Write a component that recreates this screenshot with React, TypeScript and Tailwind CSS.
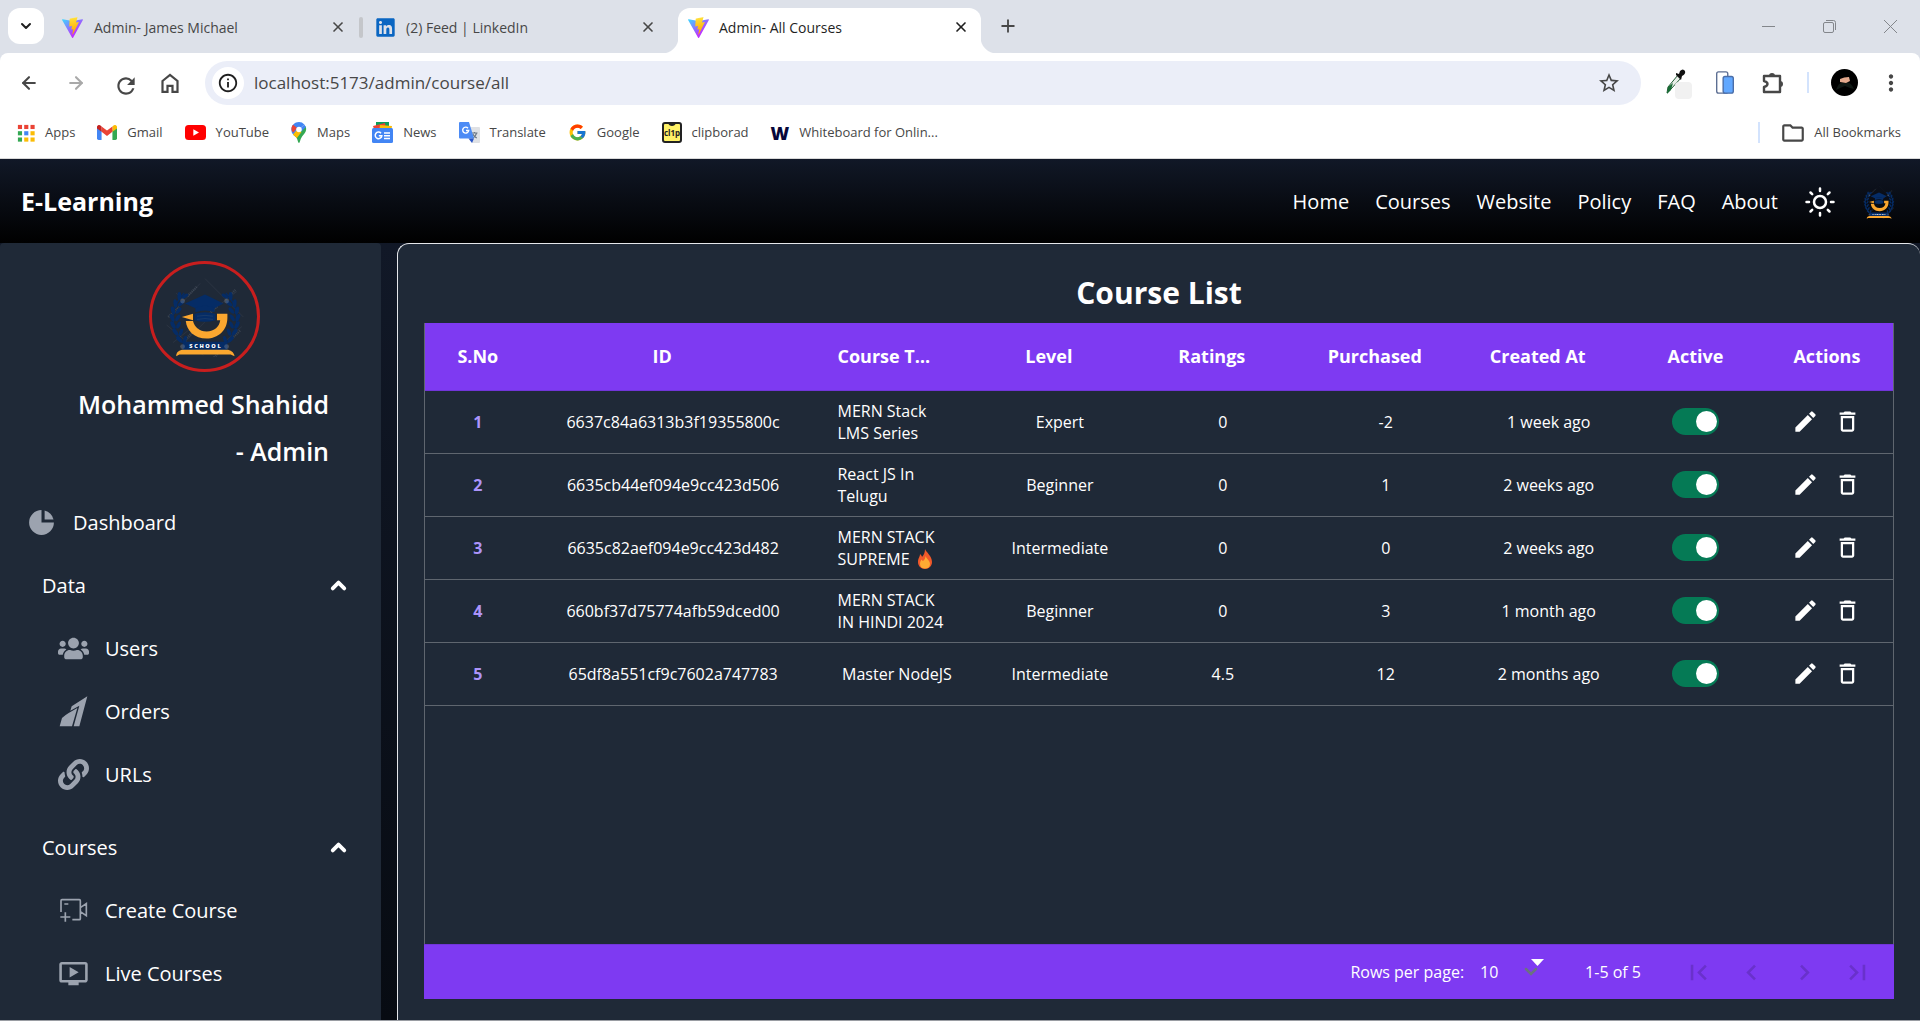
import React from "react";
import { FcGoogle } from "react-icons/fc";
import { FaUsers, FaLink, FaLinkedin } from "react-icons/fa";
import { HiChartPie } from "react-icons/hi";
import {
  MdOndemandVideo,
  MdModeEdit,
  MdDeleteOutline,
  MdFirstPage,
  MdLastPage,
  MdNavigateBefore,
  MdNavigateNext,
  MdMoreVert,
  MdRefresh,
  MdStarBorder,
  MdOutlineFolder,
  MdOutlineInfo,
} from "react-icons/md";
import { ArrowLeft, ArrowRight, ChevronDown, ChevronUp, Plus, X } from "lucide-react";

function ViteLogo({ id }: { id: string }) {
  return (
    <svg viewBox="0 0 256 257" className="size-[21px] shrink-0" aria-hidden="true">
      <defs>
        <linearGradient id={id + "a"} x1="-.828%" x2="57.636%" y1="7.652%" y2="78.411%">
          <stop offset="0%" stopColor="#41D1FF" />
          <stop offset="100%" stopColor="#BD34FE" />
        </linearGradient>
        <linearGradient id={id + "b"} x1="43.376%" x2="50.316%" y1="2.242%" y2="89.03%">
          <stop offset="0%" stopColor="#FFEA83" />
          <stop offset="8.333%" stopColor="#FFDD35" />
          <stop offset="100%" stopColor="#FFA800" />
        </linearGradient>
      </defs>
      <path
        fill={`url(#${id}a)`}
        d="M255.153 37.938L134.897 252.976c-2.483 4.44-8.862 4.466-11.382.048L.875 37.958c-2.746-4.814 1.371-10.646 6.827-9.67l120.385 21.517a6.537 6.537 0 0 0 2.322-.004l117.867-21.483c5.438-.991 9.574 4.796 6.877 9.62Z"
      />
      <path
        fill={`url(#${id}b)`}
        d="M185.432.063L96.44 17.501a3.268 3.268 0 0 0-2.634 3.014l-5.474 92.456a3.268 3.268 0 0 0 3.997 3.378l24.777-5.718c2.318-.535 4.413 1.507 3.936 3.838l-7.361 36.047c-.495 2.426 1.782 4.5 4.151 3.78l15.304-4.649c2.372-.72 4.652 1.36 4.15 3.788l-11.698 56.621c-.732 3.542 3.979 5.473 5.943 2.437l1.313-2.028l72.516-144.72c1.215-2.423-.88-5.186-3.54-4.672l-25.505 4.922c-2.396.462-4.435-1.77-3.759-4.114l16.646-57.705c.677-2.35-1.37-4.583-3.769-4.113Z"
      />
    </svg>
  );
}

function SchoolLogo({ className }: { className: string }) {
  const leaves = [0, 1, 2, 3, 4, 5, 6];
  const spots = [
    [22, 30],
    [77, 30],
    [22, 87],
    [77, 87],
  ];
  return (
    <svg viewBox="0 0 100 100" className={className} role="img" aria-label="School logo">
      <g stroke="#8f97a3" strokeOpacity=".22" strokeWidth=".6" fill="none">
        <path d="M14 40 44 8M56 44 90 18M26 80 50 56M60 94 96 62M10 82 30 66M50 2l48 48M2 60l46 38M14 20l10 10" />
        <g strokeWidth="3" strokeDasharray="1.5 1">
          <path d="M28 24 40 12M4 50 18 38M80 24l8-8M52 50l14-14M24 80l12-13M80 80l14-13M56 106l12-12" />
        </g>
      </g>
      <g fill="#052c66">
        {[false, true].map((flip) => (
          <g key={String(flip)} transform={flip ? "translate(100 0) scale(-1 1)" : undefined}>
            <path d="M24 20C8 36 4 60 22 82" fill="none" stroke="#052c66" strokeWidth="1.4" />
            {leaves.map((i) => {
              const cy = 24 + i * 9;
              const t = (i - 3) / 3;
              const cx = 11 + t * t * 9;
              return (
                <g key={i}>
                  <ellipse cx={cx - 2} cy={cy} rx="2.4" ry="5.2" transform={`rotate(${-22 - t * 22} ${cx - 2} ${cy})`} />
                  <ellipse cx={cx + 5} cy={cy} rx="2.2" ry="4.8" transform={`rotate(${34 - t * 20} ${cx + 5} ${cy})`} />
                </g>
              );
            })}
          </g>
        ))}
        <path d="M50 22 25 33l13 6q12-4 24 0l11-6z" />
        <path d="M38 38q12-4 24 0v6q-12-4-24 0zM37 46q13-4 26 0v8q-13 4-26 0z" />
        <path d="M40 49q10-2 20 0M40 53q10-2 20 0" stroke="#1f3d68" strokeWidth="1" fill="none" />
        <path d="M22 81h56v11H22z" />
      </g>
      {spots.map(([x, y]) => (
        <circle key={`${x}-${y}`} cx={x} cy={y} r="3" fill="#8f97a3" fillOpacity=".35" />
      ))}
      <g fill="#fba72f">
        <path d="M21 50 35 46v8z" />
        <path d="M65 46h13v5c0 16-12 26-26 26-15 0-25-10-26-22h9c2 8 8 13 17 13 10 0 16-6 17-14h-4z" />
        <path d="M14 99c0-5 4-8 9-8h54c5 0 9 3 10 8l-5-2H18z" />
      </g>
      <text x="51" y="89" textAnchor="middle" fontSize="7" fontWeight="800" letterSpacing="2" fill="#fff" fontFamily="Open Sans, sans-serif">
        SCHOOL
      </text>
    </svg>
  );
}

function OrdersIcon() {
  return (
    <svg viewBox="0 0 93 93" className="size-[31px]" fill="currentColor" aria-hidden="true">
      <path d="M88 1 64 91H47l17-62-27 15 4-13z" />
      <path d="M5 91 12 66q12-11 20-15l26-15-16 55z" />
    </svg>
  );
}

function CreateCourseIcon() {
  return (
    <svg viewBox="0 0 93 93" className="size-[31px]" fill="none" stroke="currentColor" strokeWidth="5" aria-hidden="true">
      <path d="M9 51V17q0-3 3-3h52q3 0 3 3v54q0 3-3 3H43M19 27h12M67 38l18-12v36L67 50M7 66h30M22 52v28" />
    </svg>
  );
}

function SunIcon() {
  return (
    <svg viewBox="0 0 32 32" className="size-8" fill="none" stroke="currentColor" strokeWidth="2.5" strokeLinecap="round" aria-hidden="true">
      <circle cx="16" cy="16" r="6" />
      <path d="M16 2.500v2.500M16 27v2.500M2.500 16H5M27 16h2.500M6.500 6.500l1.700 1.700M23.800 23.800l1.700 1.700M6.500 25.500l1.700-1.700M23.800 8.200l1.700-1.700" />
    </svg>
  );
}

function HomeIcon() {
  return (
    <svg viewBox="0 0 20 20" className="size-5" fill="none" stroke="currentColor" strokeWidth="2.200" aria-hidden="true">
      <path d="M2.500 8 10 2l7.500 6v10.800h-5v-6h-5v6h-5z" />
    </svg>
  );
}

function ExtensionIcon() {
  return (
    <svg viewBox="0 0 24 24" className="size-6" aria-hidden="true">
      <path d="M3 5h16v16H3v-5q3.500-1 3.500-3T3 10z" fill="none" stroke="currentColor" strokeWidth="2.400" strokeLinejoin="round" />
      <path d="M8 5a3 3 0 0 1 6 0zM19 10a3 3 0 0 1 0 6z" fill="currentColor" />
    </svg>
  );
}

const WhiteboardIcon = () => (
  <span aria-hidden="true" className="text-[18px] leading-5 font-extrabold text-[#07073a]">W</span>
);

const AppsIcon = () => (
  <svg viewBox="0 0 20 20" className="size-[18px]" aria-hidden="true">
    {["#ea4335", "#ea4335", "#ea4335", "#34a853", "#4285f4", "#fbbc05", "#34a853", "#fbbc05", "#fbbc05"].map((c, i) => (
      <rect key={i} x={1 + (i % 3) * 7} y={1 + Math.floor(i / 3) * 7} width="4.600" height="4.600" fill={c} />
    ))}
  </svg>
);

const GmailIcon = () => (
  <svg viewBox="0 0 24 18" className="h-[15px] w-5" aria-hidden="true">
    <path fill="#4285f4" d="M0 2.500V16a2 2 0 0 0 2 2h3.500V6z" />
    <path fill="#34a853" d="M18.500 18H22a2 2 0 0 0 2-2V2.500L18.500 6z" />
    <path fill="#fbbc04" d="M18.500 1.800v6.400L24 4.100V2.500C24 .3 21.500-.8 19.800.6z" />
    <path fill="#ea4335" d="M5.500 8.200V1.800L12 6.700l6.500-4.900v6.400L12 13.100z" />
    <path fill="#c5221f" d="M0 2.500v1.600l5.500 4.100V1.800L4.200.6C2.400-.8 0 .3 0 2.500z" />
  </svg>
);

const YouTubeIcon = () => (
  <svg viewBox="0 0 21 15" className="h-[15px] w-[21px]" aria-hidden="true">
    <rect width="21" height="15" rx="3.500" fill="#f00" />
    <path d="M8.300 4.300v6.400L14 7.500z" fill="#fff" />
  </svg>
);

const MapsIcon = () => (
  <svg viewBox="0 0 16 22" className="h-[21px] w-4" aria-hidden="true">
    <path d="M8 0C3.500 0 0 3.500 0 8c0 2 .7 3.600 1.800 5.200L13.600 2.500A7.800 7.800 0 0 0 8 0z" fill="#4285f4" />
    <path d="M1.900 2.900 6 6.300 2 11 .6 9.500C-.4 6.800.2 4.600 1.900 2.900z" fill="#ea4335" />
    <path d="M1.800 13.200 14.900 4.500C17 10 13 12.500 10.500 16.500 9.300 18.500 9 22 8 22s-1.300-3.200-2.500-5.200C4.500 15.300 3 14.700 1.800 13.200z" fill="#34a853" />
    <path d="m1.800 13.200 4-5 4.800 2.400-5 6.300c-1.100-1.500-2.700-2.300-3.800-3.700z" fill="#fbbc04" />
    <path d="M10 6 13.600 2.500 15.200 5.200 10.500 10z" fill="#4285f4" />
    <circle cx="8" cy="7.800" r="2.900" fill="#fff" />
  </svg>
);

const NewsIcon = () => (
  <svg viewBox="0 0 21 21" className="size-[21px]" aria-hidden="true">
    <path d="M4 0h13v6H4z" fill="#0c9d58" />
    <path d="m1 4 12-3 1 6H2z" fill="#ea4335" />
    <path d="m8 3 12 1-1 5H7z" fill="#fbbc04" />
    <rect y="6" width="21" height="15" rx="1.500" fill="#4285f4" />
    <path d="M9 11.200a3.300 3.300 0 1 0 .8 2.600H6.800M12 11h6M12 13.800h6M12 16.500h6" fill="none" stroke="#fff" strokeWidth="1.500" />
  </svg>
);

const TranslateIcon = () => (
  <svg viewBox="0 0 21 21" className="size-[21px]" aria-hidden="true">
    <path d="M8 5h12a1 1 0 0 1 1 1v14a1 1 0 0 1-1 1h-7z" fill="#dfe1e5" />
    <path d="M12.500 11h6M15.500 10v1M17.500 11c-.5 2.500-2 4-4 5M13.800 12c.8 2 2.200 3.200 4 4" fill="none" stroke="#6b7785" strokeWidth="1.200" />
    <path d="M1 0h9l5 16.500H1a1 1 0 0 1-1-1V1a1 1 0 0 1 1-1z" fill="#4c8bf5" />
    <path d="M9.500 16.500H15L13 21z" fill="#2a56c6" />
    <path d="M9 6.200a3 3 0 1 0 .7 2.300H7" fill="none" stroke="#fff" strokeWidth="1.400" />
  </svg>
);

const ClipIcon = () => (
  <svg viewBox="0 0 20 21" className="h-[21px] w-5" aria-hidden="true">
    <rect x="1" y="1" width="18" height="19" rx="2" fill="#fff267" stroke="#222" strokeWidth="2" />
    <path d="M6 1h8q-1 3-4 3T6 1z" fill="#222" />
    <text x="10" y="13.500" textAnchor="middle" fontSize="8" fontWeight="700" fill="#222" fontFamily="Open Sans, sans-serif">
      cl1p
    </text>
  </svg>
);

const bookmarks: [string, React.ReactNode][] = [
  ["Apps", <AppsIcon />],
  ["Gmail", <GmailIcon />],
  ["YouTube", <YouTubeIcon />],
  ["Maps", <MapsIcon />],
  ["News", <NewsIcon />],
  ["Translate", <TranslateIcon />],
  ["Google", <FcGoogle className="size-[19px]" />],
  ["clipborad", <ClipIcon />],
  ["Whiteboard for Onlin...", <WhiteboardIcon />],
];

function CloseTab({ label }: { label: string }) {
  return (
    <button aria-label={`Close ${label}`} className="ml-auto grid size-5 place-items-center">
      <X className="size-4" strokeWidth={2.5} />
    </button>
  );
}

function Browser() {
  return (
    <div className="shrink-0 bg-[#dde1e9] text-[#474747]">
      <div className="flex h-[53px] items-end">
        <button aria-label="Search tabs" className="mb-[9px] ml-2 grid size-9 shrink-0 place-items-center rounded-xl bg-white text-[#1f1f1f]">
          <ChevronDown className="size-4" strokeWidth={3} />
        </button>
        <div className="flex h-[45px] w-[319px] shrink-0 items-center gap-[11px] pb-[7px] pl-[18px] text-[14px]">
          <ViteLogo id="v1" />
          Admin- James Michael
          <CloseTab label="Admin- James Michael" />
          <span className="h-[21px] w-1 rounded bg-[#c4c6ca]" />
        </div>
        <div className="flex h-[45px] w-[315px] shrink-0 items-center gap-[10px] pr-5 pb-[7px] pl-3 text-[14px]">
          <FaLinkedin className="size-[21px] text-[#0a66c2]" />
          (2) Feed | LinkedIn
          <CloseTab label="LinkedIn" />
        </div>
        <div className="relative flex h-[45px] w-[303px] shrink-0 items-center gap-[10px] rounded-t-xl bg-white px-[10px] pb-[7px] text-[14px] text-[#1f1f1f]">
          <span className="absolute bottom-0 -left-4 size-4 bg-[radial-gradient(circle_at_0_0,transparent_16px,white_17px)]" />
          <span className="absolute -right-4 bottom-0 size-4 bg-[radial-gradient(circle_at_100%_0,transparent_16px,white_17px)]" />
          <ViteLogo id="v2" />
          Admin- All Courses
          <CloseTab label="Admin- All Courses" />
        </div>
        <button aria-label="New tab" className="mb-[17px] ml-[17px]">
          <Plus className="size-5" strokeWidth={2.2} />
        </button>
        <div className="ml-auto flex items-center gap-[46px] pr-[22px] pb-[19px] text-[#83868b]">
          <button aria-label="Minimize">
            <svg viewBox="0 0 15 15" className="size-[15px]" stroke="currentColor">
              <path d="M1 7.500h13" />
            </svg>
          </button>
          <button aria-label="Restore">
            <svg viewBox="0 0 15 15" className="size-[15px]" fill="none" stroke="currentColor">
              <rect x="1.500" y="3.500" width="10" height="10" rx="1.500" />
              <path d="M4 1.500h7.500a2 2 0 0 1 2 2V11" />
            </svg>
          </button>
          <button aria-label="Close window">
            <svg viewBox="0 0 15 15" className="size-[15px]" stroke="currentColor">
              <path d="m1 1 13 13M14 1 1 14" />
            </svg>
          </button>
        </div>
      </div>

      <div className="rounded-t-lg border-b border-[#d9d9d9] bg-white">
        <div className="flex h-[59px] items-center pr-4 pl-[19px]">
          <div className="flex w-[186px] shrink-0 items-center gap-[27px]">
            <button aria-label="Back"><ArrowLeft className="size-5" strokeWidth={2.5} /></button>
            <button aria-label="Forward" className="text-[#a9a9a9]"><ArrowRight className="size-5" strokeWidth={2.5} /></button>
            <button aria-label="Reload" className="grid size-5 place-items-center"><MdRefresh className="size-[26px] shrink-0" /></button>
            <button aria-label="Home"><HomeIcon /></button>
          </div>
          <div className="flex h-11 min-w-0 flex-1 items-center rounded-full bg-[#ebeef8] pr-5 pl-[7px]">
            <span className="mr-[10px] grid size-8 place-items-center rounded-full bg-white text-[#1f1f1f]">
              <MdOutlineInfo className="size-[22px]" />
            </span>
            <input
              aria-label="Address"
              className="min-w-0 flex-1 bg-transparent text-[17px] outline-none"
              defaultValue="localhost:5173/admin/course/all"
            />
            <button aria-label="Bookmark this page"><MdStarBorder className="size-6" /></button>
          </div>
          <div className="flex items-center gap-[22px] pl-6">
            <button aria-label="Color picker">
              <svg viewBox="0 0 28 32" className="h-8 w-7" aria-hidden="true">
                <path d="m2 26 1-6 10-12 3 3L6 22z" fill="#e9efe9" stroke="#1f5a33" />
                <path d="m2 27 1-7 5-4-2 7z" fill="#176b34" />
                <path d="m11 6 3 1 1-3q3-3 5 0 1 3-3 5l-1 4-5-5z" fill="#111" />
                <rect x="10" y="15" width="17" height="17" rx="4" fill="#f1f1f1" />
              </svg>
            </button>
            <button aria-label="Device preview">
              <svg viewBox="0 0 20 26" className="h-6 w-5" aria-hidden="true">
                <rect x="1" y="1" width="12" height="23" rx="2" fill="#fff" stroke="#5d6f93" strokeWidth="1.500" />
                <rect x="8" y="6" width="11" height="18" rx="2" fill="#62a8ff" stroke="#4b6ea8" strokeWidth="1.500" />
              </svg>
            </button>
            <button aria-label="Extensions" className="ml-1"><ExtensionIcon /></button>
            <span className="h-[21px] w-[2px] bg-[#d3e3fd]" />
            <button aria-label="Profile">
              <svg viewBox="0 0 27 27" className="size-[27px]" aria-hidden="true">
                <circle cx="13.500" cy="13.500" r="13.500" fill="#000" />
                <path d="M5 21q3-9 8-7 6-3 10 6l-4-1-5-2-5 2z" fill="#101814" />
                <path d="M9 10q4-2 9-2l1 4-4 2-6-1z" fill="#e5a98d" />
              </svg>
            </button>
            <button aria-label="Menu" className="ml-[-2px]"><MdMoreVert className="size-[26px]" /></button>
          </div>
        </div>
        <div className="flex h-[46px] items-center pr-[19px] pb-[5px] pl-[17px] text-[13px]">
          <nav aria-label="Bookmarks" className="flex items-center gap-[22px]">
            {bookmarks.map(([label, icon]) => (
              <a key={label} href="#" className="flex items-center gap-[10px]">
                {icon}
                {label}
              </a>
            ))}
          </nav>
          <span className="ml-auto h-[21px] w-[2px] bg-[#d3e3fd]" />
          <a href="#" className="ml-5 flex items-center gap-2">
            <MdOutlineFolder className="size-[26px]" />
            All Bookmarks
          </a>
        </div>
      </div>
    </div>
  );
}

function AppHeader() {
  return (
    <header className="flex h-[84px] shrink-0 items-center justify-between bg-linear-to-b/srgb from-[#111827] to-black pt-[2px] pr-6 pl-[21px] text-white">
      <a href="#" className="text-[25px] font-bold">E-Learning</a>
      <nav className="flex items-center gap-[26px] text-[20px]">
        {["Home", "Courses", "Website", "Policy", "FAQ", "About"].map((l) => (
          <a key={l} href="#">{l}</a>
        ))}
        <button aria-label="Light mode"><SunIcon /></button>
        <button aria-label="Account"><SchoolLogo className="size-[34px]" /></button>
      </nav>
    </header>
  );
}

function Group({ title, items }: { title: string; items: [string, React.ReactNode][] }) {
  return (
    <section className="mb-[10px]">
      <button className="flex h-[63px] w-full items-center justify-between pr-[31px] pl-[42px]">
        {title}
        <ChevronUp className="size-[23px]" strokeWidth={4} />
      </button>
      <ul>
        {items.map(([label, icon]) => (
          <li key={label}>
            <a href="#" className="flex h-[63px] items-center gap-4 pl-[58px]">
              <span className="grid w-[31px] place-items-center text-[#9ca3af]">{icon}</span>
              {label}
            </a>
          </li>
        ))}
      </ul>
    </section>
  );
}

function Sidebar() {
  return (
    <aside className="w-[381px] shrink-0 overflow-hidden rounded-t bg-[#1f2937] pt-[18px] text-[20px] text-white">
      <div className="ml-[149px] grid size-[111px] place-items-center rounded-full border-3 border-[#c81e1e]">
        <SchoolLogo className="size-20" />
      </div>
      <div className="mt-[9px] pr-[52px] text-right text-[25px] leading-[47px] font-semibold">
        <p>Mohammed Shahidd</p>
        <p>- Admin</p>
      </div>
      <nav aria-label="Admin" className="mt-4">
        <a href="#" className="flex h-[63px] items-center gap-4 pl-[26px]">
          <HiChartPie className="size-[31px] text-[#9ca3af]" />
          Dashboard
        </a>
        <Group
          title="Data"
          items={[
            ["Users", <FaUsers className="size-[31px]" />],
            ["Orders", <OrdersIcon />],
            ["URLs", <FaLink className="size-[31px]" />],
          ]}
        />
        <Group
          title="Courses"
          items={[
            ["Create Course", <CreateCourseIcon />],
            ["Live Courses", <MdOndemandVideo className="size-[31px]" />],
          ]}
        />
      </nav>
    </aside>
  );
}

const rows = [
  ["6637c84a6313b3f19355800c", "MERN Stack LMS Series", "Expert", "0", "-2", "1 week ago"],
  ["6635cb44ef094e9cc423d506", "React JS In Telugu", "Beginner", "0", "1", "2 weeks ago"],
  ["6635c82aef094e9cc423d482", "MERN STACK SUPREME", "Intermediate", "0", "0", "2 weeks ago"],
  ["660bf37d75774afb59dced00", "MERN STACK IN\u00a0HINDI 2024", "Beginner", "0", "3", "1 month ago"],
  ["65df8a551cf9c7602a747783", "Master NodeJS", "Intermediate", "4.5", "12", "2 months ago"],
];

const Flame = () => (
  <svg viewBox="0 0 14 20" className="ml-2 inline h-5 w-[14px] align-[-4px]" role="img" aria-label="fire">
    <path d="M7 0c1 3 7 7 7 13 0 4-3 7-7 7s-7-3-7-7c0-4 2-5 2-8 1 1 2 2 2 3 2-2 3-5 3-8z" fill="#f1592a" />
    <path d="M7.500 7c1 3 4.500 4.500 4.500 8 0 3-2 4.500-5 4.500S2 18 2 15c0-2.500 1-3.500 1.500-4.500.5.8 1 1.200 1.500 1.500C6.500 11 7.500 9 7.500 7z" fill="#ffac33" />
  </svg>
);

function CourseTable() {
  return (
    <table className="w-full table-fixed text-center text-[16px]">
      <colgroup>
        <col className="w-[7.2%]" />
        <col className="w-[19.4%]" />
        <col className="w-[11.1%]" />
        <col className="w-[11.1%]" />
        <col className="w-[11.1%]" />
        <col className="w-[11.1%]" />
        <col className="w-[11.1%]" />
        <col className="w-[8.9%]" />
        <col className="w-[9%]" />
      </colgroup>
      <thead>
        <tr className="h-[67px] border-b border-[#7135d9] bg-[#7e3af2] text-[18px] font-bold">
          <th>S.No</th>
          <th className="pr-[22px]">ID</th>
          <th className="pl-[22px]">
            <span className="block w-[96px] truncate text-left">Course Title</span>
          </th>
          <th className="pr-[22px]">Level</th>
          <th className="pr-[22px]">Ratings</th>
          <th className="pr-[22px]">Purchased</th>
          <th className="pr-[22px]">Created At</th>
          <th>Active</th>
          <th>Actions</th>
        </tr>
      </thead>
      <tbody>
        {rows.map(([id, title, level, ratings, purchased, created], i) => (
          <tr key={id} className="h-[63px] border-b border-[#5f666f]">
            <td className="font-bold text-[#ac94fa]">{i + 1}</td>
            <td>{id}</td>
            <td className="px-[22px] leading-[22px]">
              <span className="flex justify-center">
                <span className="text-left">
                  {title}
                  {i === 2 && <Flame />}
                </span>
              </span>
            </td>
            <td>{level}</td>
            <td>{ratings}</td>
            <td>{purchased}</td>
            <td>{created}</td>
            <td>
              <input
                type="checkbox"
                role="switch"
                defaultChecked
                aria-label={`${title} active`}
                className="mx-auto block h-[27px] w-[47px] appearance-none rounded-full bg-[#057a55] before:mt-[3px] before:ml-6 before:block before:size-[21px] before:rounded-full before:bg-white"
              />
            </td>
            <td>
              <div className="flex items-center justify-center gap-[15px]">
                <button aria-label={`Edit ${title}`}><MdModeEdit className="size-[27px]" /></button>
                <button aria-label={`Delete ${title}`}><MdDeleteOutline className="size-[27px]" /></button>
              </div>
            </td>
          </tr>
        ))}
      </tbody>
    </table>
  );
}

function Pagination() {
  return (
    <div className="-mx-px flex h-[55px] shrink-0 items-center justify-end border-t border-[#7135d9] bg-[#7e3af2] pr-[21px] text-[16px]">
      <label htmlFor="rows">Rows per page:</label>
      <div className="relative ml-4">
        <select id="rows" className="block w-[64px] appearance-none bg-transparent outline-none">
          <option>10</option>
        </select>
        <svg viewBox="0 0 20 20" className="pointer-events-none absolute top-[-2px] right-0 size-5" aria-hidden="true">
          <path d="M2 11l5 5 5-5" fill="none" stroke="#6b7280" strokeWidth="2.500" strokeLinecap="round" />
          <path d="M7 1h13l-6.500 7z" fill="#fff" />
        </svg>
      </div>
      <span className="mr-[42px] ml-[41px]">1-5 of 5</span>
      <div className="flex gap-[22px] text-[#6931cb]">
        <button aria-label="First page" disabled><MdFirstPage className="size-[31px]" /></button>
        <button aria-label="Previous page" disabled><MdNavigateBefore className="size-[31px]" /></button>
        <button aria-label="Next page" disabled><MdNavigateNext className="size-[31px]" /></button>
        <button aria-label="Last page" disabled><MdLastPage className="size-[31px]" /></button>
      </div>
    </div>
  );
}

export default function App() {
  return (
    <div className="flex h-screen flex-col overflow-hidden bg-black font-['Open_Sans',sans-serif]">
      <Browser />
      <AppHeader />
      <div className="flex min-h-0 flex-1 gap-4 border-b border-[#9a9da3] bg-linear-to-b/srgb from-[#111827] to-[#070b12]">
        <Sidebar />
        <main className="flex min-w-0 flex-1 flex-col rounded-t-xl border-t border-l border-[#e5e7eb] bg-[#1f2937] px-[26px] pb-[21px] text-white">
          <h1 className="pt-[31px] pb-3 text-center text-[30px] leading-9 font-bold">Course List</h1>
          <div className="flex min-h-0 flex-1 flex-col border-x border-[#5f666f]">
            <div className="min-h-0 flex-1">
              <CourseTable />
            </div>
            <Pagination />
          </div>
        </main>
      </div>
    </div>
  );
}
